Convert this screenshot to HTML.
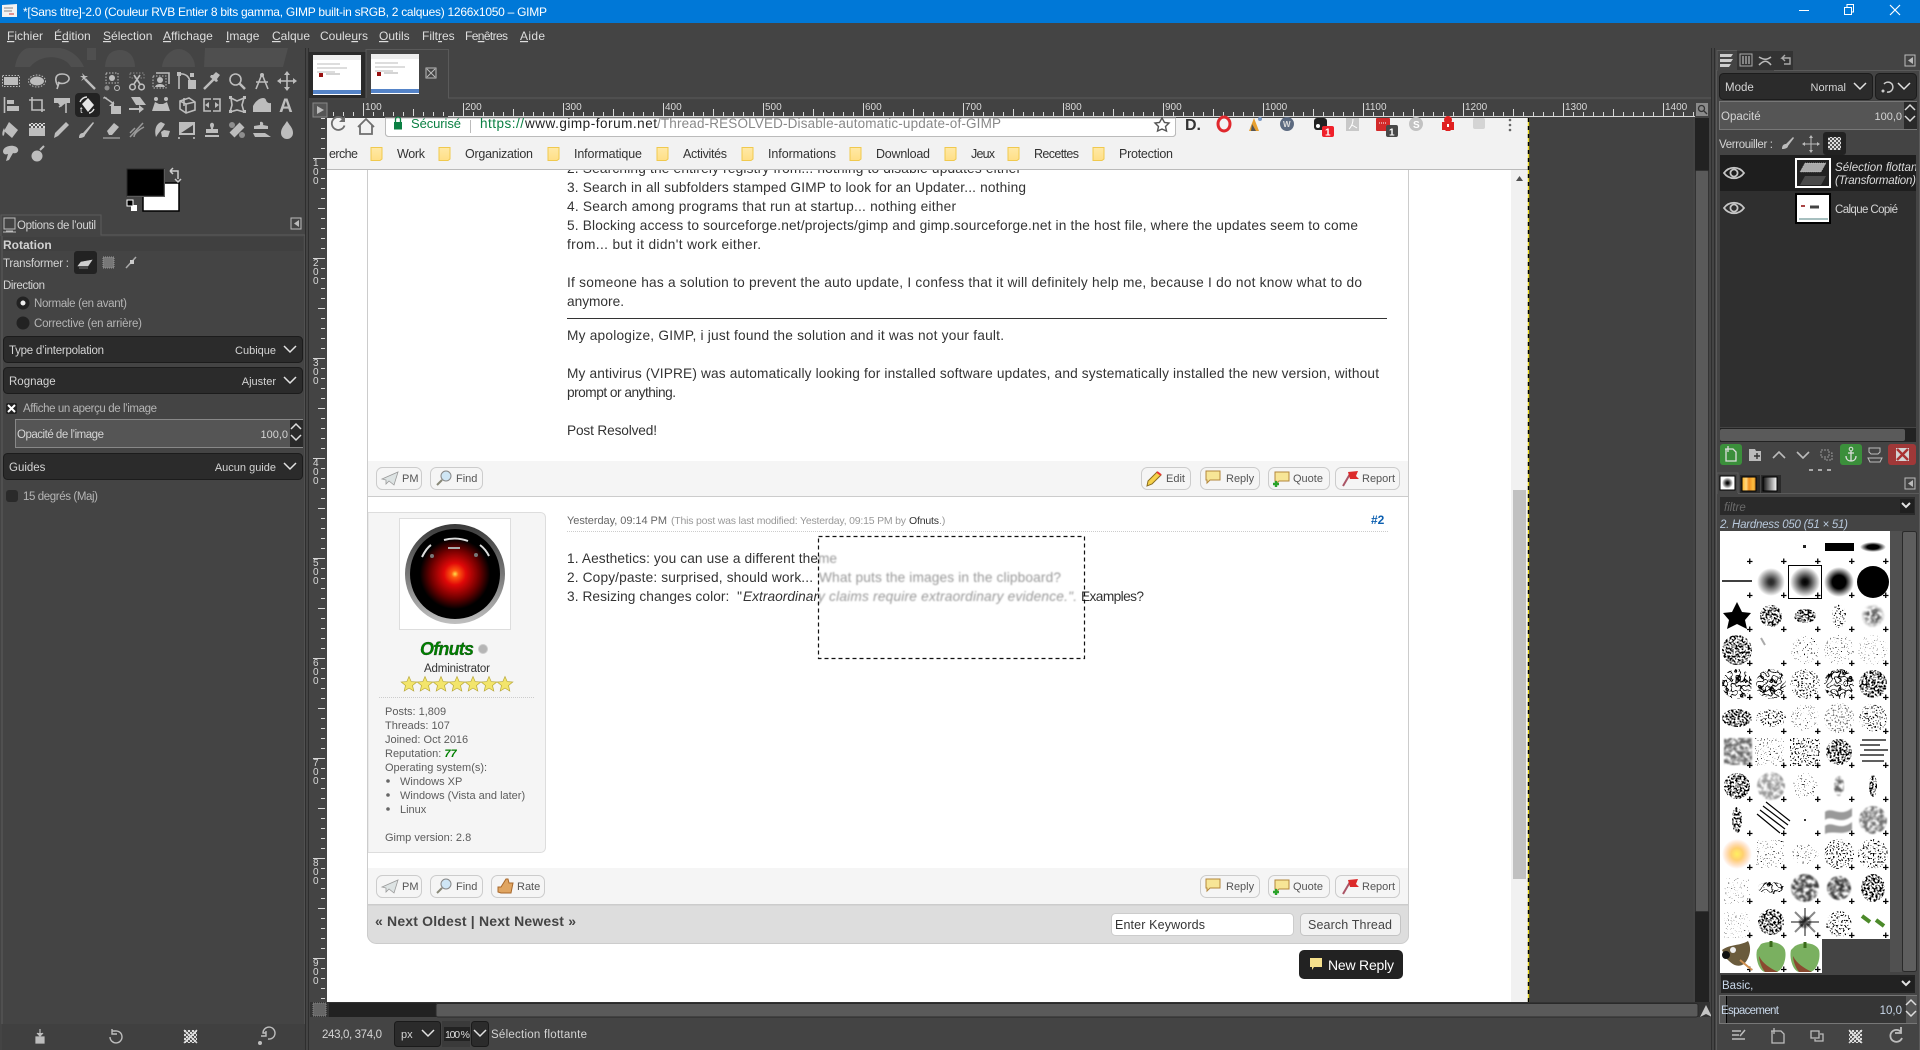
<!DOCTYPE html>
<html lang="fr"><head><meta charset="utf-8"><title>GIMP</title>
<style>
html,body{margin:0;padding:0;background:#444;overflow:hidden;width:1920px;height:1050px}
svg{display:block}
text{font-family:"Liberation Sans",sans-serif;white-space:pre}
.m{font-size:12px;fill:#dedede}
.g{font-size:11.5px;fill:#d4d4d4}
.v{font-size:11px;fill:#d4d4d4}
.d{font-size:11.5px;fill:#b5b5b5}
.p{font-size:13.7px;fill:#333}
.b{font-size:11px;fill:#555}
.a{font-size:11px;fill:#5c5c5c}
.k{font-size:12.5px;fill:#333}
.i{fill:#bdbdbd}
.s{fill:none;stroke:#bdbdbd;stroke-width:1.6}
.r{font-size:10px;fill:#d8d8d8}
</style></head><body>
<svg width="1920" height="1050" viewBox="0 0 1920 1050" xmlns="http://www.w3.org/2000/svg">
<defs>
<pattern id="rt" patternUnits="userSpaceOnUse" x="263" y="100" width="100" height="18"><path d="M.5 3V16M10.5 12V16M20.5 12V16M30.5 12V16M40.5 12V16M50.5 9V16M60.5 12V16M70.5 12V16M80.5 12V16M90.5 12V16" stroke="#d8d8d8" fill="none"/></pattern>
<pattern id="rl" patternUnits="userSpaceOnUse" x="310" y="58" width="17" height="100"><path d="M3 .5H15M11 10.5H15M11 20.5H15M11 30.5H15M11 40.5H15M8 50.5H15M11 60.5H15M11 70.5H15M11 80.5H15M11 90.5H15" stroke="#d8d8d8" fill="none"/></pattern>
<pattern id="plus" patternUnits="userSpaceOnUse" x="1720" y="531" width="34" height="34"><path d="M27 30.500H32.500M29.750 27.500V33" stroke="#000" stroke-width="1.300"/></pattern>
<pattern id="chk" width="4" height="4" patternUnits="userSpaceOnUse"><rect width="4" height="4" fill="#ddd"/><rect width="2" height="2" fill="#555"/><rect x="2" y="2" width="2" height="2" fill="#555"/></pattern>
<radialGradient id="hal"><stop offset="0" stop-color="#ffe14a"/><stop offset=".08" stop-color="#ff5a10"/><stop offset=".25" stop-color="#e00808"/><stop offset=".55" stop-color="#700000"/><stop offset=".8" stop-color="#000"/></radialGradient>
<linearGradient id="ring" x1="0" y1="0" x2="0" y2="1"><stop offset="0" stop-color="#3a3a3a"/><stop offset=".5" stop-color="#777"/><stop offset="1" stop-color="#c0c0c0"/></linearGradient>
<radialGradient id="s1"><stop offset="0" stop-color="#000"/><stop offset=".2" stop-color="#111"/><stop offset="1" stop-color="#000" stop-opacity="0"/></radialGradient>
<radialGradient id="s2"><stop offset="0" stop-color="#000"/><stop offset=".45" stop-color="#000"/><stop offset="1" stop-color="#000" stop-opacity="0"/></radialGradient>
<radialGradient id="sun"><stop offset="0" stop-color="#ffef60"/><stop offset=".4" stop-color="#ffd070"/><stop offset="1" stop-color="#ffb080" stop-opacity="0"/></radialGradient>
<linearGradient id="gr" x1="0" x2="1"><stop offset="0" stop-color="#111"/><stop offset="1" stop-color="#fff"/></linearGradient>
<linearGradient id="or" x1="0" x2="1"><stop offset="0" stop-color="#ffb020"/><stop offset=".3" stop-color="#ffd880"/><stop offset=".5" stop-color="#f09020"/><stop offset=".8" stop-color="#ffc040"/><stop offset="1" stop-color="#d08020"/></linearGradient>
<linearGradient id="fold" x1="0" y1="0" x2="0" y2="1"><stop offset="0" stop-color="#ffe9a6"/><stop offset="1" stop-color="#ffdf86"/></linearGradient>
<filter id="f1" x="-10%" y="-10%" width="120%" height="120%" color-interpolation-filters="sRGB"><feTurbulence type="fractalNoise" baseFrequency=".5" numOctaves="2" seed="3" result="n"/><feColorMatrix in="n" type="matrix" values="0 0 0 0 0 0 0 0 0 0 0 0 0 0 0 9 0 0 0 -4.200" result="t"/><feComposite in="t" in2="SourceGraphic" operator="in"/></filter>
<filter id="f2" x="-10%" y="-10%" width="120%" height="120%" color-interpolation-filters="sRGB"><feTurbulence type="fractalNoise" baseFrequency=".6" numOctaves="1" seed="8" result="n"/><feColorMatrix in="n" type="matrix" values="0 0 0 0 0 0 0 0 0 0 0 0 0 0 0 12 0 0 0 -6.800" result="t"/><feComposite in="t" in2="SourceGraphic" operator="in"/></filter>
<filter id="f3" x="-10%" y="-10%" width="120%" height="120%" color-interpolation-filters="sRGB"><feTurbulence type="turbulence" baseFrequency=".22" numOctaves="1" seed="5" result="n"/><feColorMatrix in="n" type="matrix" values="0 0 0 0 0 0 0 0 0 0 0 0 0 0 0 -14 0 0 0 1.700" result="t"/><feComposite in="t" in2="SourceGraphic" operator="in"/></filter>
<filter id="f4" x="-10%" y="-10%" width="120%" height="120%" color-interpolation-filters="sRGB"><feTurbulence type="fractalNoise" baseFrequency=".25" numOctaves="2" seed="11" result="n"/><feColorMatrix in="n" type="matrix" values="0 0 0 0 0 0 0 0 0 0 0 0 0 0 0 3 0 0 0 -.9" result="t"/><feComposite in="t" in2="SourceGraphic" operator="in"/><feGaussianBlur stdDeviation=".8"/></filter>
<filter id="f5" x="-10%" y="-10%" width="120%" height="120%" color-interpolation-filters="sRGB"><feTurbulence type="fractalNoise" baseFrequency=".7" numOctaves="1" seed="21" result="n"/><feColorMatrix in="n" type="matrix" values="0 0 0 0 0 0 0 0 0 0 0 0 0 0 0 20 0 0 0 -13" result="t"/><feComposite in="t" in2="SourceGraphic" operator="in"/></filter>
<filter id="bl"><feGaussianBlur stdDeviation=".7"/></filter>
<path id="chev" d="M-6-3L0 3 6-3" fill="none" stroke="#e2e2e2" stroke-width="1.500"/>
<path id="spin" d="M-5-2L0-7 5-2M-5 4L0 9 5 4" fill="none" stroke="#dcdcdc" stroke-width="1.500"/>
<g id="eye"><path d="M-10 0C-5-7 5-7 10 0 5 7-5 7-10 0Z" fill="none" stroke="#c6c6c6" stroke-width="1.800"/><circle r="3.600" fill="none" stroke="#c6c6c6" stroke-width="1.800"/></g>
<path id="star" d="M0-7.500L2.200-2.400 7.800-2 3.500 1.500 4.800 7 0 4.100-4.800 7-3.500 1.500-7.800-2-2.200-2.400Z" fill="#f3e56b" stroke="#b9a93a" stroke-width=".7"/>
<g id="fo"><path d="M0 .5H11V12L9 13.500H0Z" fill="url(#fold)" stroke="#f0c94e"/></g>
<g id="bub"><path d="M-7-6H7V3H-3L-6 6V3H-7Z" fill="#f7e596" stroke="#b3863c"/></g>
</defs>

<rect width="1920" height="1050" fill="#444"/>
<!-- Title bar -->
<rect width="1920" height="23" fill="#0078d7"/>
<path d="M2 5L17 4V17H2Z" fill="#f2f2f2"/><path d="M4 8H13M4 11H12" stroke="#888"/><path d="M9 14H14" stroke="#c33"/>
<text x="23" y="16" font-size="12" fill="#fff" textLength="524">*[Sans titre]-2.0 (Couleur RVB Entier 8 bits gamma, GIMP built-in sRGB, 2 calques) 1266x1050 – GIMP</text>
<path d="M1799 10.500H1809" stroke="#fff"/><path d="M1844.500 7.500H1851.500V14.500H1844.500ZM1847 7V4.500H1853.500V12H1852" fill="none" stroke="#fff"/><path d="M1890 5L1900 15M1900 5L1890 15" stroke="#fff" stroke-width="1.200"/>
<!-- Menu -->
<g class="m">
<text class="m" x="7" y="40"><tspan text-decoration="underline">F</tspan>ichier</text>
<text class="m" x="54" y="40">É<tspan text-decoration="underline">d</tspan>ition</text>
<text class="m" x="103" y="40"><tspan text-decoration="underline">S</tspan>élection</text>
<text class="m" x="163" y="40"><tspan text-decoration="underline">A</tspan>ffichage</text>
<text class="m" x="226" y="40"><tspan text-decoration="underline">I</tspan>mage</text>
<text class="m" x="272" y="40"><tspan text-decoration="underline">C</tspan>alque</text>
<text class="m" x="320" y="40">Coule<tspan text-decoration="underline">u</tspan>rs</text>
<text class="m" x="379" y="40"><tspan text-decoration="underline">O</tspan>utils</text>
<text class="m" x="422" y="40">Filt<tspan text-decoration="underline">r</tspan>es</text>
<text class="m" x="465" y="40" textLength="43">Fe<tspan text-decoration="underline">n</tspan>êtres</text>
<text class="m" x="520" y="40" textLength="25"><tspan text-decoration="underline">A</tspan>ide</text>
</g>
<!-- Wilber decoration -->
<path d="M15 67C17 54 24 48 29 48H60C72 50 80 58 84 67H71C66 56 42 52 30 67ZM105 67C106 54 112 50 120 50 130 50 135 58 135 67ZM87 48H96V60H87ZM162 67C163 56 172 49 178 49 188 49 195 58 195 67ZM205 48H288L283 67H204Z" fill="#4f4f4f"/>

<!-- Toolbox icons -->
<g>
<g transform="translate(11,81)"><rect x="-7" y="-4" width="14" height="8" class="i"/><rect x="-8.500" y="-5.500" width="17" height="11" fill="none" stroke="#bdbdbd" stroke-dasharray="1.500 1.500"/></g>
<g transform="translate(37,81)"><ellipse rx="7" ry="4.500" class="i"/><ellipse rx="8.500" ry="6" fill="none" stroke="#bdbdbd" stroke-dasharray="1.500 1.500"/></g>
<g transform="translate(62,81)"><path class="s" d="M-4 5C-7 0-8-7 0-7 7-7 9-2 5 1 2 3-2 3-4 1M-3 2L-5 8"/></g>
<g transform="translate(87,81)"><path d="M-2-2L8 8" stroke="#bdbdbd" stroke-width="2.400"/><path class="i" d="M-5-8L-4-5-7-5-4-3-6 0-3-2-1 0-2-3 1-5-2-5Z"/></g>
<g transform="translate(112,81)"><rect x="-6" y="-8" width="12" height="10" fill="none" stroke="#bdbdbd" stroke-dasharray="1.500 1.500"/><circle cy="-3" r="3" class="i"/><circle cx="-5" cy="7" r="2.500" fill="#8c8c8c"/><circle cx="5" cy="7" r="2.500" fill="none" stroke="#bdbdbd"/></g>
<g transform="translate(137,81)"><rect x="-7" y="-8" width="14" height="5" fill="none" stroke="#888" stroke-dasharray="1.500 1.500"/><path class="s" d="M-3-6L3 3M3-6L-3 3"/><circle cx="-4.500" cy="6" r="2.800" class="s"/><circle cx="4.500" cy="6" r="2.800" class="s"/></g>
<g transform="translate(161,81)"><rect x="-8" y="-5" width="13" height="12" fill="none" stroke="#bdbdbd" stroke-dasharray="1.500 1.500"/><path class="s" d="M-5-8H8V3"/><circle cx="-1" cy="-1" r="3" class="i"/><path class="i" d="M-6 6C-5 2 3 2 4 6Z"/></g>
<g transform="translate(187,81)"><path class="s" d="M-8-7V8M-8-7C0-8 2-3 3 0"/><rect x="-10" y="-9" width="4" height="4" class="i"/><rect x="1" y="-1" width="8" height="9" class="i"/><rect x="3" y="-8" width="4" height="4" class="i"/></g>
<g transform="translate(212,81)"><path d="M-8 8L3-3" stroke="#bdbdbd" stroke-width="2.500"/><path class="i" d="M1-6L4-9 8-6 5-2 6 0 4 1-2-4-1-6Z"/></g>
<g transform="translate(237,81)"><circle cx="-1.500" cy="-1.500" r="5.500" class="s"/><path d="M2.500 2.500L8 8" stroke="#bdbdbd" stroke-width="2.500"/></g>
<g transform="translate(262,81)"><path class="s" d="M0-7L-6 8M0-7L6 8M-6 1H6"/><circle cy="-6" r="2" class="i"/></g>
<g transform="translate(287,81)"><path class="s" d="M-7 0H7M0-7V7"/><path class="i" d="M0-10L3-6H-3ZM0 10L3 6H-3ZM-10 0L-6-3V3ZM10 0L6-3V3Z"/></g>

<g transform="translate(11,105)"><path d="M-6.500-8V8" stroke="#bdbdbd" stroke-width="1.600"/><rect x="-4" y="-5" width="7" height="4" class="i"/><rect x="-4" y="1" width="12" height="5" class="i"/></g>
<g transform="translate(37,105)"><path class="s" d="M-8-5H5V7M-5-8V5H8"/></g>
<g transform="translate(62,105)"><path class="i" d="M-8-7H8V-2H3L-1 2-4-2H-8Z"/><path class="s" d="M-3 2L4-3V8"/></g>
<rect x="75" y="93" width="25" height="24" rx="4" fill="#222"/>
<g transform="translate(87,105)"><path d="M-5-1L1-7 7 0 1 7Z" fill="#e6e6e6"/><path d="M-7-3C-6-6-3-8 0-8M7 4C6 6 4 8 2 8" stroke="#e6e6e6" fill="none" stroke-width="1.400"/><text x="-7" y="8" font-size="9" fill="#eee">t</text></g>
<g transform="translate(112,105)"><rect x="-1" y="1" width="10" height="8" class="i"/><path class="s" d="M-8-8L2-1"/><path class="i" d="M2-4V1H-3Z"/><path d="M-9-7H-5" stroke="#bdbdbd"/></g>
<g transform="translate(137,105)"><path class="i" d="M-6-8H3L9 0H-1ZM-8 3H2V0L7 4 2 8V5H-8Z"/></g>
<g transform="translate(161,105)"><path class="i" d="M-6-3L-2-1 2-1 6-3 9 6H-9ZM-5-8A2 2 0 0 1-5-4 2 2 0 0 1-5-8ZM5-8A2 2 0 0 1 5-4 2 2 0 0 1 5-8Z"/></g>
<g transform="translate(187,105)"><path class="s" d="M-7-4L2-7 8-3V5L-1 8-7 4ZM-7-4L-1-1V8M-1-1L8-3M-3-7L-3 1"/></g>
<g transform="translate(212,105)"><path class="s" d="M-1-6H-8V6H-1M1-6H8V6H1"/><path class="i" d="M-7 0L-3-3V3ZM7 0L3-3V3Z"/></g>
<g transform="translate(237,105)"><path class="s" d="M-6-7L0-4 7-7 5 0 7 7 0 5-7 7-5 0Z"/><rect x="-8" y="-9" width="3" height="3" class="i"/><rect x="6" y="-9" width="3" height="3" class="i"/><rect x="-8" y="5" width="3" height="3" class="i"/><rect x="6" y="5" width="3" height="3" class="i"/></g>
<g transform="translate(262,105)"><path class="i" d="M-9 7V1C-5-7 3-9 4-5 5-1 9-2 9-2V7Z"/></g>
<text x="279" y="112" font-size="19" font-weight="bold" fill="#bdbdbd">A</text>

<g transform="translate(11,130)"><path class="i" d="M-2-8L7 0 1 8-7 1Z"/><path class="i" d="M-7-2C-9 2-9 5-8 6-6 5-6 0-7-2Z"/></g>
<g transform="translate(37,130)"><rect x="-8" y="-2" width="16" height="8" fill="#bdbdbd"/><rect x="-8" y="-7" width="16" height="5" fill="url(#chk)"/></g>
<g transform="translate(62,130)"><path class="i" d="M-8 8L-7 3 4-8 7-5-4 6Z"/></g>
<g transform="translate(87,130)"><path class="i" d="M-8 8C-8 4-6 3-4 3L6-8 7-7-2 5C-2 7-5 8-8 8Z"/></g>
<g transform="translate(112,130)"><path class="i" d="M-5 1L2-7 7-3 0 5H-3Z"/><path d="M-9 8H8" stroke="#bdbdbd"/></g>
<g transform="translate(137,130)"><path d="M-7 7L6-7M-3 7C-3 3 3-1 7-3M-7 3L-2-2" stroke="#999" fill="none" stroke-width="1.500"/></g>
<g transform="translate(162,130)"><path class="i" d="M-1-8C-6-6-8 0-6 7-3 2 1-2 3-6ZM2 0L8 1 6 7H0L-1 2Z"/></g>
<g transform="translate(187,130)"><path class="i" d="M-8-8H8V5H-8ZM-6 3H6V-5Z"/><path class="s" d="M-8 7V9M7 7V9"/></g>
<g transform="translate(212,130)"><path class="i" d="M-2-5C-2-8 2-8 2-5 2-3 1-3 1-1H6V3H-6V-1H-1C-1-3-2-3-2-5ZM-7 5H7V7H-7Z"/></g>
<g transform="translate(237,130)"><path d="M-5 5L5-5" stroke="#bdbdbd" stroke-width="7"/><circle cx="-5" cy="-5" r="3" fill="#8e8e8e"/><circle cx="5" cy="5" r="3" fill="#8e8e8e"/></g>
<g transform="translate(262,130)"><path class="i" d="M-2-8C0-9 2-7 1-5L6-4V-1H-8V-4L-2-5ZM-9 3H3L9 7H-7Z"/></g>
<g transform="translate(287,130)"><path class="i" d="M0-9C3-4 6-2 6 3A6 6 0 0 1-6 3C-6-2-3-4 0-9Z"/></g>

<g transform="translate(11,153)"><path class="i" d="M-8-2C-7-8 5-9 7-4 8-1 5 1 2 0L-2 7-5 8-3 1C-6 2-8 1-8-2Z"/></g>
<g transform="translate(37,154)"><circle cy="2" r="5.500" class="i"/><path d="M3-4L7-8" stroke="#bdbdbd" stroke-width="2"/></g>
</g>

<!-- FG/BG -->
<rect x="143" y="183" width="36" height="28" fill="#fff" stroke="#000" stroke-width="1.500"/>
<rect x="127" y="169" width="37" height="27" fill="#000" stroke="#2a2a2a" stroke-width="1"/>
<rect x="164" y="169" width="1" height="28" fill="#5a5a5a"/><rect x="127" y="196" width="38" height="1" fill="#5a5a5a"/>
<path d="M170 171H178V179M170 171L173 168M170 171L173 174M175 179L178 182 181 179" fill="none" stroke="#ccc" stroke-width="1.500"/>
<rect x="131" y="205" width="6" height="6" fill="#fff"/><rect x="127" y="200" width="6" height="6" fill="#000" stroke="#fff"/>

<!-- Tool options -->
<path d="M1 236V215H101V235H305V1024M2 236V1024" fill="none" stroke="#5b5b5b"/>
<path d="M4 218H15V229H4ZM6 231H13M3 232H16" fill="none" stroke="#bdbdbd"/>
<text class="g" x="17" y="229" textLength="79">Options de l’outil</text>
<rect x="291" y="218" width="10" height="11" fill="none" stroke="#bbb"/><path d="M299 220V227L294 223.500Z" fill="#bbb"/>
<rect x="3" y="237" width="300" height="14" fill="#404040"/>
<text x="3" y="249" font-size="12" font-weight="bold" fill="#d2d2d2">Rotation</text>
<text class="g" x="3" y="267" textLength="66">Transformer :</text>
<rect x="74" y="251" width="23" height="23" rx="3" fill="#222"/><path d="M81 262L92 260 88 266H78ZM79 268H88" fill="#cfcfcf" stroke="#cfcfcf" stroke-width=".6"/>
<rect x="103" y="257" width="11" height="11" fill="#777" stroke="#999" stroke-dasharray="1 1"/>
<path d="M126 268L136 257" stroke="#aaa" stroke-width="1.500"/><rect x="130" y="260" width="4" height="4" fill="#ccc"/>
<text class="g" x="3" y="289" textLength="42">Direction</text>
<circle cx="23" cy="303" r="6.500" fill="#222"/><circle cx="23" cy="303" r="2.500" fill="#eee"/>
<text class="d" x="34" y="307" textLength="93">Normale (en avant)</text>
<circle cx="23" cy="323" r="6.500" fill="#222"/>
<text class="d" x="34" y="327" textLength="108">Corrective (en arrière)</text>
<rect x="3.500" y="336.500" width="299" height="26" rx="4" fill="#2b2b2b" stroke="#1c1c1c"/>
<text class="g" x="9" y="354" textLength="95">Type d’interpolation</text><text class="v" x="276" y="354" text-anchor="end">Cubique</text><use href="#chev" x="290" y="349"/>
<rect x="3.500" y="367.500" width="299" height="26" rx="4" fill="#2b2b2b" stroke="#1c1c1c"/>
<text class="g" x="9" y="385">Rognage</text><text class="v" x="276" y="385" text-anchor="end">Ajuster</text><use href="#chev" x="290" y="380"/>
<rect x="6" y="403" width="11" height="11" rx="2" fill="#222"/><path d="M8 405L15 412M15 405L8 412" stroke="#fff" stroke-width="2"/>
<text class="d" x="23" y="412" textLength="134">Affiche un aperçu de l’image</text>
<rect x="15.500" y="419.500" width="287" height="28" fill="#555" stroke="#888"/><rect x="290" y="420" width="13" height="27" fill="#2a2a2a"/>
<text class="g" x="17" y="438" textLength="87">Opacité de l’image</text><text class="v" x="288" y="438" text-anchor="end">100,0</text><use href="#spin" x="296" y="431"/>
<rect x="3.500" y="453.500" width="299" height="26" rx="4" fill="#2b2b2b" stroke="#1c1c1c"/>
<text class="g" x="9" y="471">Guides</text><text class="v" x="276" y="471" text-anchor="end">Aucun guide</text><use href="#chev" x="290" y="466"/>
<rect x="6" y="490" width="12" height="12" rx="3" fill="#2a2a2a"/>
<text class="d" x="23" y="500" textLength="75">15 degrés (Maj)</text>
<!-- Tool options bottom -->
<rect x="2" y="1024" width="303" height="26" fill="#404040"/>
<path d="M40 1029V1035M37 1033L40 1036 43 1033M36 1037H44V1043H36Z" fill="#bdbdbd" stroke="#bdbdbd" stroke-width="1.200"/>
<path d="M112 1031H115A6 6 0 1 1 110 1037M112 1029V1034H117" fill="none" stroke="#bdbdbd" stroke-width="1.400"/>
<rect x="184" y="1030" width="13" height="13" fill="url(#chk)"/><path d="M184 1030L197 1043M197 1030L184 1043" stroke="#ddd" stroke-width="1.500"/>
<path d="M268 1031H265A6 6 0 1 1 270 1037M268 1029V1034H263" fill="none" stroke="#bdbdbd" stroke-width="1.400" transform="translate(-2,2)"/><circle cx="260" cy="1043" r="2" fill="#bdbdbd"/>
<path d="M305.500 48V1050M308.500 48V1050" stroke="#2e2e2e"/>

<!-- Image tabs -->
<rect x="309" y="52" width="57" height="46" fill="#2a2a2a"/>
<path d="M366 98V49.500H448.500V98H1711" fill="none" stroke="#5a5a5a"/>
<g id="tb"><rect x="313" y="55" width="48" height="40" fill="#fff"/><rect x="313" y="55" width="48" height="5" fill="#eee"/><path d="M317 64H340M317 68H347M317 72H335" stroke="#bbb"/><rect x="319" y="73" width="4" height="4" fill="#911"/><path d="M326 74H340" stroke="#aaa"/><rect x="313" y="90" width="48" height="4" fill="#5584c8"/></g>
<rect x="371" y="54" width="48" height="40" fill="#fff"/><rect x="371" y="54" width="48" height="5" fill="#eee"/><path d="M375 63H398M375 67H405M375 71H393" stroke="#bbb"/><rect x="377" y="72" width="4" height="4" fill="#911"/><path d="M384 73H398" stroke="#aaa"/><rect x="371" y="89" width="48" height="4" fill="#5584c8"/>
<rect x="426" y="68" width="10" height="10" fill="none" stroke="#bbb"/><path d="M427 69L435 77M435 69L427 77" stroke="#bbb"/>

<!-- Rulers -->
<rect x="310" y="100" width="1400" height="18" fill="#424242"/>
<rect x="327" y="100" width="1368" height="18" fill="url(#rt)"/>
<rect x="313" y="103" width="14" height="14" fill="#555" stroke="#888"/><path d="M317 106V114L324 110Z" fill="#bbb"/>
<g class="r">
<text class="r" x="365" y="110">100</text><text class="r" x="465" y="110">200</text><text class="r" x="565" y="110">300</text><text class="r" x="665" y="110">400</text><text class="r" x="765" y="110">500</text><text class="r" x="865" y="110">600</text><text class="r" x="965" y="110">700</text><text class="r" x="1065" y="110">800</text><text class="r" x="1165" y="110">900</text><text class="r" x="1265" y="110">1000</text><text class="r" x="1365" y="110">1100</text><text class="r" x="1465" y="110">1200</text><text class="r" x="1565" y="110">1300</text><text class="r" x="1665" y="110">1400</text>
</g>
<rect x="1696" y="103" width="12" height="13" fill="#8a8a8a"/><circle cx="1701.500" cy="108.500" r="3" fill="none" stroke="#333" stroke-width="1.300"/><path d="M1704 111L1707 114" stroke="#333" stroke-width="1.300"/>
<path d="M448 116.500H1695" stroke="#d8d8d8"/>
<rect x="310" y="118" width="17" height="884" fill="url(#rl)"/>
<g class="r" font-size="10">
<text class="r" x="313" y="166">1</text><text class="r" x="313" y="175">0</text><text class="r" x="313" y="184">0</text>
<text class="r" x="313" y="266">2</text><text class="r" x="313" y="275">0</text><text class="r" x="313" y="284">0</text>
<text class="r" x="313" y="366">3</text><text class="r" x="313" y="375">0</text><text class="r" x="313" y="384">0</text>
<text class="r" x="313" y="466">4</text><text class="r" x="313" y="475">0</text><text class="r" x="313" y="484">0</text>
<text class="r" x="313" y="566">5</text><text class="r" x="313" y="575">0</text><text class="r" x="313" y="584">0</text>
<text class="r" x="313" y="666">6</text><text class="r" x="313" y="675">0</text><text class="r" x="313" y="684">0</text>
<text class="r" x="313" y="766">7</text><text class="r" x="313" y="775">0</text><text class="r" x="313" y="784">0</text>
<text class="r" x="313" y="866">8</text><text class="r" x="313" y="875">0</text><text class="r" x="313" y="884">0</text>
<text class="r" x="313" y="966">9</text><text class="r" x="313" y="975">0</text><text class="r" x="313" y="984">0</text>
</g>

<!-- Canvas page -->
<rect x="327" y="118" width="1202" height="884" fill="#fff"/>
<rect x="1529" y="118" width="164" height="884" fill="#424242"/>
<path d="M367.500 170V936M1408.500 170V936" stroke="#ccc"/>

<g class="p">
<text class="p" x="567" y="173" textLength="454">2. Searching the entirely registry from... nothing to disable updates either</text>
<text class="p" x="567" y="192" textLength="459">3. Search in all subfolders stamped GIMP to look for an Updater... nothing</text>
<text class="p" x="567" y="211" textLength="389">4. Search among programs that run at startup... nothing either</text>
<text class="p" x="567" y="230" textLength="791">5. Blocking access to sourceforge.net/projects/gimp and gimp.sourceforge.net in the host file, where the updates seem to come</text>
<text class="p" x="567" y="249" textLength="194">from... but it didn't work either.</text>
<text class="p" x="567" y="287" textLength="795">If someone has a solution to prevent the auto update, I confess that it will definitely help me, because I do not know what to do</text>
<text class="p" x="567" y="306" textLength="57">anymore.</text>
<text class="p" x="567" y="340" textLength="437">My apologize, GIMP, i just found the solution and it was not your fault.</text>
<text class="p" x="567" y="378" textLength="812">My antivirus (VIPRE) was automatically looking for installed software updates, and systematically installed the new version, without</text>
<text class="p" x="567" y="397" textLength="109">prompt or anything.</text>
<text class="p" x="567" y="435" textLength="90">Post Resolved!</text>
</g>
<path d="M567 318.500H1387" stroke="#333"/>

<!-- bar 1 -->
<rect x="368" y="461" width="1040" height="35" fill="#f5f5f5"/><path d="M368 496.500H1408" stroke="#ccc"/>
<g fill="#f5f5f5" stroke="#ccc">
<rect x="376.500" y="467.500" width="45" height="22" rx="6"/><rect x="430.500" y="467.500" width="52" height="22" rx="6"/>
<rect x="1141.500" y="467.500" width="49" height="22" rx="6"/><rect x="1200.500" y="467.500" width="59" height="22" rx="6"/><rect x="1268.500" y="467.500" width="61" height="22" rx="6"/><rect x="1335.500" y="467.500" width="64" height="22" rx="6"/>
</g>
<!-- second bar -->
<rect x="368" y="868" width="1040" height="36" fill="#f5f5f5"/>
<g fill="#f5f5f5" stroke="#ccc">
<rect x="376.500" y="875.500" width="45" height="22" rx="6"/><rect x="430.500" y="875.500" width="52" height="22" rx="6"/><rect x="491.500" y="875.500" width="53" height="22" rx="6"/>
<rect x="1200.500" y="875.500" width="59" height="22" rx="6"/><rect x="1268.500" y="875.500" width="61" height="22" rx="6"/><rect x="1335.500" y="875.500" width="64" height="22" rx="6"/>
</g>
<path d="M368 904.500H1408" stroke="#ccc"/>
<g id="btns">
<text class="b" x="402" y="482">PM</text><text class="b" x="456" y="482">Find</text><text class="b" x="1166" y="482">Edit</text><text class="b" x="1226" y="482">Reply</text><text class="b" x="1293" y="482">Quote</text><text class="b" x="1362" y="482">Report</text>
<text class="b" x="402" y="890">PM</text><text class="b" x="456" y="890">Find</text><text class="b" x="517" y="890">Rate</text><text class="b" x="1226" y="890">Reply</text><text class="b" x="1293" y="890">Quote</text><text class="b" x="1362" y="890">Report</text>
</g>
<g id="plane"><path d="M382 479L398 472 394 485 389 481 386 484V480Z" fill="#dde3e3" stroke="#999" stroke-width=".8"/><path d="M382 887L398 880 394 893 389 889 386 892V888Z" fill="#dde3e3" stroke="#999" stroke-width=".8"/></g>
<g><circle cx="446" cy="476" r="5" fill="#cfe6f5" stroke="#888"/><path d="M442 480L437 485" stroke="#887" stroke-width="2"/><circle cx="446" cy="884" r="5" fill="#cfe6f5" stroke="#888"/><path d="M442 888L437 893" stroke="#887" stroke-width="2"/></g>
<path d="M498 887H501L506 879H508L509 883H513L511 893H501L498 892Z" fill="#e0a561" stroke="#a8682b"/>
<path d="M1147 486L1148 481 1157 472 1161 475 1152 484Z" fill="#f6d14a" stroke="#8a6d1f"/><path d="M1157 472L1161 475" stroke="#e33" stroke-width="2"/>
<use href="#bub" x="1213" y="477"/><use href="#bub" x="1213" y="885"/>
<use href="#bub" x="1282" y="478"/><use href="#bub" x="1282" y="886"/>
<path d="M1276 481V487M1273 484H1279M1276 889V895M1273 892H1279" stroke="#2aa32a" stroke-width="2.400"/>
<path d="M1343 486L1350 474" stroke="#a56" stroke-width="2"/><path d="M1348 472L1358 471 1356 476 1359 479 1350 479Z" fill="#dc2a2a"/>
<path d="M1343 894L1350 882" stroke="#a56" stroke-width="2"/><path d="M1348 880L1358 879 1356 884 1359 887 1350 887Z" fill="#dc2a2a"/>

<!-- Author box -->
<path d="M368 512.500H540A5 5 0 0 1 545.500 517.500V847.500A5 5 0 0 1 540 852.500H368Z" fill="#f5f5f5" stroke="#ddd"/>
<path d="M367.500 497V870" stroke="#ccc"/>
<rect x="399.500" y="518.500" width="111" height="111" fill="#fff" stroke="#ddd"/>
<circle cx="455" cy="574" r="50" fill="url(#ring)"/><circle cx="455" cy="574" r="45" fill="#000"/><circle cx="455" cy="574" r="44" fill="url(#hal)"/>
<path d="M444 540C451 538 460 538 468 541M422 557C425 551 428 547 431 545M480 545C484 548 487 552 489 556" stroke="#ddd" fill="none" stroke-width="2"/><circle cx="432" cy="556" r="2" fill="#777"/><circle cx="476" cy="555" r="2" fill="#777"/><path d="M448 548H460" stroke="#aaa" stroke-width="2"/>
<text x="420" y="655" font-size="18" font-weight="bold" font-style="italic" fill="#008000" stroke="#111" stroke-width=".2" textLength="54">Ofnuts</text>
<circle cx="483" cy="649" r="4.500" fill="#b5b5b5" stroke="#ccc"/>
<text x="424" y="672" font-size="11.500" fill="#333" textLength="66">Administrator</text>
<use href="#star" x="409" y="684"/><use href="#star" x="425" y="684"/><use href="#star" x="441" y="684"/><use href="#star" x="457" y="684"/><use href="#star" x="473" y="684"/><use href="#star" x="489" y="684"/><use href="#star" x="505" y="684"/>
<path d="M379 697.500H535" stroke="#ccc" stroke-dasharray="1 1"/>
<g>
<text class="a" x="385" y="715">Posts: 1,809</text>
<text class="a" x="385" y="729">Threads: 107</text>
<text class="a" x="385" y="743">Joined: Oct 2016</text>
<text class="a" x="385" y="757">Reputation: <tspan fill="#007f00" font-weight="bold" font-style="italic">77</tspan></text>
<text class="a" x="385" y="771">Operating system(s):</text>
<circle cx="388" cy="781" r="1.800" fill="#666"/><text class="a" x="400" y="785">Windows XP</text>
<circle cx="388" cy="795" r="1.800" fill="#666"/><text class="a" x="400" y="799">Windows (Vista and later)</text>
<circle cx="388" cy="809" r="1.800" fill="#666"/><text class="a" x="400" y="813">Linux</text>
<text class="a" x="385" y="841">Gimp version: 2.8</text>
</g>
<!-- Post 2 -->
<text x="567" y="524" font-size="11" fill="#666" textLength="100">Yesterday, 09:14 PM</text>
<text x="671" y="524" font-size="10.500" fill="#999" textLength="235">(This post was last modified: Yesterday, 09:15 PM by</text>
<text x="909" y="524" font-size="10.500" fill="#333" textLength="30">Ofnuts</text><text x="939" y="524" font-size="10.500" fill="#999">.)</text>
<text x="1371" y="524" font-size="12" font-weight="bold" fill="#0c5fb0">#2</text>
<path d="M567 531.500H1388" stroke="#ccc" stroke-dasharray="1 1"/>
<text class="p" x="567" y="563" textLength="251">1. Aesthetics: you can use a different the</text>
<text class="p" x="567" y="582" textLength="246">2. Copy/paste: surprised, should work...</text>
<text class="p" x="567" y="601" textLength="175">3. Resizing changes color:  "</text>
<text class="p" x="743" y="601" font-style="italic" textLength="75">Extraordinar</text>
<g filter="url(#bl)" fill="#8a8a8a">
<text class="p" style="fill:#999" x="818" y="563">me</text>
<text class="p" style="fill:#999" x="819" y="582" textLength="242">What puts the images in the clipboard?</text>
<text class="p" style="fill:#999" x="818" y="601" font-style="italic" textLength="259">y claims require extraordinary evidence.".</text>
</g>
<text class="p" x="1081" y="601" textLength="63">Examples?</text>
<rect x="818.500" y="536.500" width="266" height="122" fill="none" stroke="#111" stroke-width="1.200" stroke-dasharray="4 3"/>

<!-- Bottom forum -->
<path d="M367.500 905V934A9 9 0 0 0 376.500 943.500H1400A8 8 0 0 0 1408.500 935V905Z" fill="#ddd" stroke="#ccc"/>
<text x="375" y="926" font-size="14" font-weight="bold" fill="#444" textLength="201">« Next Oldest | Next Newest »</text>
<rect x="1111.500" y="913.500" width="182" height="22" rx="4" fill="#fff" stroke="#ccc"/>
<text class="k" x="1115" y="929" textLength="90">Enter Keywords</text>
<rect x="1300.500" y="913.500" width="100" height="22" rx="4" fill="#f2f2f2" stroke="#c4c4c4"/>
<text class="k" x="1308" y="929" style="fill:#444" textLength="84">Search Thread</text>
<rect x="1299" y="950" width="104" height="29" rx="5" fill="#222"/>
<path d="M1310 958H1322V967H1314L1312 970V967H1310Z" fill="#f5e08c"/>
<text x="1328" y="970" font-size="14" fill="#fff" textLength="66">New Reply</text>

<!-- page scrollbar -->
<rect x="1511" y="170" width="17" height="832" fill="#f1f1f1"/><rect x="1513" y="490" width="13" height="389" fill="#c1c1c1"/>
<path d="M1516 181L1519.500 176 1523 181Z" fill="#505050"/>

<!-- Browser top -->
<rect x="327" y="118" width="1202" height="21" fill="#f2f2f2"/>
<path d="M385.500 118V133A3 3 0 0 0 388.500 136.500H1172A3 3 0 0 0 1175.500 133V118Z" fill="#fff" stroke="#bbb"/>
<path d="M343.500 119.500A6.500 6.500 0 1 0 344.500 125.500" fill="none" stroke="#6e6e6e" stroke-width="1.800"/><path d="M345 116V122H339Z" fill="#6e6e6e"/>
<path d="M358 127L366 119 374 127M360 125V134H372V125" fill="none" stroke="#6e6e6e" stroke-width="1.800"/>
<rect x="394" y="122" width="8" height="7.500" fill="#0b8043"/><path d="M395.500 122V119.500A2.500 2.500 0 0 1 400.500 119.500V122" fill="none" stroke="#0b8043" stroke-width="1.300"/>
<text x="411" y="128" font-size="13" fill="#0b8043" textLength="50">Sécurisé</text>
<path d="M470.500 120V133" stroke="#bbb"/>
<text x="480" y="128" font-size="13.500" fill="#0b8043" textLength="44">https://</text>
<text x="525" y="128" font-size="13.500" fill="#222" textLength="132">www.gimp-forum.net</text>
<text x="657" y="128" font-size="13.500" fill="#888" textLength="344">/Thread-RESOLVED-Disable-automatic-update-of-GIMP</text>
<path d="M1162 118L1164.500 122.500 1169 123 1165.500 126.500 1166.500 131 1162 129 1157.500 131 1158.500 126.500 1155 123 1159.500 122.500Z" fill="#fff" stroke="#555" stroke-width="1.400"/>
<!-- extensions -->
<text x="1185" y="130" font-size="16" font-weight="bold" fill="#333">D.</text>
<ellipse cx="1224" cy="124" rx="6" ry="7" fill="none" stroke="#e0282d" stroke-width="3"/>
<path d="M1254 118L1259 131H1249Z" fill="#e8a030"/><path d="M1252 124L1256 131H1251Z" fill="#555"/><circle cx="1260" cy="119" r="2" fill="#7a9ac4"/>
<circle cx="1287" cy="124" r="7" fill="#5c6a80"/><text x="1283" y="127" font-size="8" font-weight="bold" fill="#ddd">W</text>
<rect x="1314" y="118" width="13" height="12" rx="3" fill="#222"/><circle cx="1318" cy="126" r="2" fill="#fff"/><rect x="1322" y="126" width="12" height="11" rx="2" fill="#f0202a"/><text x="1325" y="135.500" font-size="10" font-weight="bold" fill="#fff">1</text>
<rect x="1346" y="118" width="13" height="13" fill="#c8c8c8"/><path d="M1349 129C1352 126 1353 122 1353 119M1352 125L1357 128" stroke="#fff" fill="none"/>
<rect x="1376" y="118" width="14" height="13" rx="1" fill="#d32a2a"/><path d="M1379 123H1387" stroke="#fff" stroke-dasharray="1 1"/>
<rect x="1386" y="125" width="12" height="12" rx="2" fill="#484848"/><text x="1389" y="135.500" font-size="10" font-weight="bold" fill="#fff">1</text>
<circle cx="1416" cy="124" r="7" fill="#c2c2c2"/><text x="1413" y="128" font-size="10" font-weight="bold" fill="#fff">S</text>
<path d="M1442 122H1454V130H1451L1450 131H1446L1445 130H1442Z" fill="#e02020"/><circle cx="1448" cy="120" r="4" fill="#e02020"/><rect x="1447" y="124" width="2" height="3" fill="#fff"/>
<rect x="1473" y="118" width="12" height="11" rx="2" fill="#d4d4d4"/>
<circle cx="1510" cy="120" r="1.300" fill="#666"/><circle cx="1510" cy="125" r="1.300" fill="#666"/><circle cx="1510" cy="130" r="1.300" fill="#666"/>
<!-- bookmarks -->
<rect x="327" y="137" width="1202" height="32" fill="#f2f2f2"/><path d="M327 169.500H1529" stroke="#bbb"/>
<path d="M385.500 130V133A3 3 0 0 0 388.500 136.500H1172A3 3 0 0 0 1175.500 133V130" fill="none" stroke="#bbb"/>
<g class="k">
<text class="k" x="329" y="158" textLength="29">erche</text>
<use href="#fo" x="371" y="147"/><text class="k" x="397" y="158" textLength="28">Work</text>
<use href="#fo" x="439" y="147"/><text class="k" x="465" y="158" textLength="68">Organization</text>
<use href="#fo" x="548" y="147"/><text class="k" x="574" y="158" textLength="68">Informatique</text>
<use href="#fo" x="657" y="147"/><text class="k" x="683" y="158" textLength="44">Activités</text>
<use href="#fo" x="742" y="147"/><text class="k" x="768" y="158" textLength="68">Informations</text>
<use href="#fo" x="850" y="147"/><text class="k" x="876" y="158" textLength="54">Download</text>
<use href="#fo" x="945" y="147"/><text class="k" x="971" y="158" textLength="24">Jeux</text>
<use href="#fo" x="1008" y="147"/><text class="k" x="1034" y="158" textLength="45">Recettes</text>
<use href="#fo" x="1093" y="147"/><text class="k" x="1119" y="158" textLength="54">Protection</text>
</g>
<!-- marching ants on right -->
<path d="M1528.500 118V1002" stroke="#e8d820" stroke-width="1.400"/><path d="M1528.500 118V1002" stroke="#000" stroke-width="1.400" stroke-dasharray="4 4"/>

<!-- canvas scrollbars -->
<rect x="1695" y="118" width="14" height="884" fill="#222"/><rect x="1695.500" y="170.500" width="13" height="741" rx="1" fill="#5a5a5a" stroke="#333"/>
<rect x="310" y="1002" width="1400" height="15" fill="#333"/>
<rect x="313" y="1003" width="13" height="13" fill="#666" stroke="#888" stroke-dasharray="1 1"/>
<rect x="329" y="1003" width="107" height="14" fill="#222"/>
<rect x="436" y="1003.500" width="1262" height="13.500" rx="2" fill="#5a5a5a" stroke="#2a2a2a"/>
<path d="M1700 1017L1706 1005 1712 1017 1706 1014Z" fill="#c4c4c4"/>
<!-- status -->
<text class="g" x="322" y="1038" textLength="60">243,0, 374,0</text>
<rect x="394.500" y="1021.500" width="46" height="25" rx="3" fill="#2b2b2b" stroke="#1a1a1a"/><text class="v" x="401" y="1038">px</text><use href="#chev" x="428" y="1033"/>
<rect x="442" y="1021" width="28" height="26" fill="#3a3a3a"/><rect x="444" y="1027" width="26" height="14" fill="#222"/><text x="445" y="1038" font-size="10.500" fill="#ddd" textLength="25">100 %</text>
<rect x="471.500" y="1021.500" width="17" height="25" rx="3" fill="#2b2b2b" stroke="#1a1a1a"/><use href="#chev" x="480" y="1033"/>
<text class="g" x="491" y="1038" textLength="96">Sélection flottante</text>
<path d="M1711.500 48V1050M1714.500 48V1050" stroke="#2e2e2e"/>

<!-- Right dock: layers -->
<path d="M1716.500 1050V70.500H1717V50.500H1737M1774 70.500H1919" fill="none" stroke="#5a5a5a"/>
<rect x="1737" y="51" width="56" height="19" fill="#333"/>
<path d="M1720 54H1733L1731 57H1720ZM1720 59H1733L1731 62H1720ZM1720 64H1731L1729 67H1720Z" fill="#ccc"/>
<rect x="1740" y="54" width="12" height="12" fill="none" stroke="#aaa"/><path d="M1743 56V64M1746 56V64M1749 56V64" stroke="#aaa" stroke-width="1.400"/>
<path d="M1759 57C1764 60 1767 60 1771 57M1759 65C1764 60 1767 60 1771 65" fill="none" stroke="#bbb" stroke-width="1.600"/>
<path d="M1787 58H1782L1785 55M1782 58L1785 61M1783 58H1790V64H1784" fill="none" stroke="#aaa" stroke-width="1.400"/>
<rect x="1905" y="55" width="10" height="11" fill="none" stroke="#bbb"/><path d="M1913 57V64L1908 60.500Z" fill="#bbb"/>
<rect x="1719.500" y="73.500" width="153" height="26" rx="4" fill="#2b2b2b" stroke="#1c1c1c"/>
<text class="g" x="1725" y="91">Mode</text><text class="v" x="1846" y="91" text-anchor="end">Normal</text><use href="#chev" x="1860" y="86"/>
<rect x="1875.500" y="73.500" width="41" height="26" rx="4" fill="#2b2b2b" stroke="#1c1c1c"/>
<path d="M1884 84A5 5 0 1 1 1887 92" fill="none" stroke="#ccc" stroke-width="1.500"/><circle cx="1883" cy="91" r="1.500" fill="#ccc"/><use href="#chev" x="1904" y="86"/>
<rect x="1719.500" y="101.500" width="197" height="28" fill="#555" stroke="#777"/><rect x="1904" y="102" width="13" height="27" fill="#2a2a2a"/>
<text class="g" x="1721" y="120">Opacité</text><text class="v" x="1902" y="120" text-anchor="end">100,0</text><use href="#spin" x="1910" y="112"/>
<text class="g" x="1719" y="148" textLength="54">Verrouiller :</text>
<path d="M1782 149C1782 145 1784 144 1786 144L1793 137 1794 138 1788 146C1788 148 1785 149 1782 149Z" fill="#bbb"/>
<path d="M1811 137V151M1804 144H1818" stroke="#bbb"/><path d="M1811 135L1813 138H1809ZM1811 153L1813 150H1809ZM1802 144L1805 142V146ZM1820 144L1817 142V146Z" fill="#bbb"/>
<rect x="1823" y="132" width="23" height="23" rx="3" fill="#222"/><rect x="1828" y="137" width="13" height="13" fill="url(#chk)"/>
<rect x="1720" y="155" width="196" height="272" fill="#2f2f2f"/>
<rect x="1720" y="155" width="196" height="36" fill="#1e1e1e"/>
<use href="#eye" x="1734" y="173"/><use href="#eye" x="1734" y="208"/>
<rect x="1796" y="159" width="34" height="28" fill="#222" stroke="#fff" stroke-width="2"/><path d="M1805 163H1826L1821 172H1800Z" fill="#aaa" stroke="#ddd" stroke-dasharray="1 1" stroke-width=".5"/><path d="M1805 176H1826L1821 185H1800Z" fill="#4a4a4a"/>
<text x="1835" y="171" font-size="11.500" font-style="italic" fill="#ddd" textLength="92">Sélection flottante</text>
<rect x="1916" y="155" width="4" height="36" fill="#444"/>
<text x="1835" y="184" font-size="11.500" font-style="italic" fill="#ddd" textLength="81">(Transformation)</text>
<rect x="1795" y="193" width="36" height="31" fill="#000"/><rect x="1797" y="195" width="32" height="27" fill="#fff"/><path d="M1801 206H1805" stroke="#a44" stroke-width="2"/><path d="M1810 207H1819" stroke="#444" stroke-width="3"/><path d="M1799 219H1828" stroke="#8aa" stroke-width="1.500"/>
<text class="g" x="1835" y="213" textLength="63">Calque Copié</text>
<rect x="1720" y="428" width="196" height="14" fill="#222"/><rect x="1720" y="429" width="185" height="12" rx="2" fill="#5a5a5a"/>
<!-- Layer buttons -->
<rect x="1720" y="444" width="22" height="21" rx="3" fill="#3b8f3b"/><path d="M1726 449H1733L1736 452V461H1726ZM1728 446V452M1725 449H1731" fill="none" stroke="#ddd" stroke-width="1.300"/>
<path d="M1749 449H1755L1756 451H1761V461H1749Z" fill="#bbb"/><path d="M1757 453V459M1754 456H1760" stroke="#333" stroke-width="1.400"/>
<path d="M1773 458L1779 452 1785 458" fill="none" stroke="#bbb" stroke-width="1.600"/>
<path d="M1797 452L1803 458 1809 452" fill="none" stroke="#bbb" stroke-width="1.600"/>
<path d="M1821 450H1829V457H1821ZM1825 458V460H1832V453H1830" fill="none" stroke="#999" stroke-dasharray="2 1"/>
<rect x="1840" y="444" width="22" height="21" rx="3" fill="#3b8f3b"/><circle cx="1851" cy="449" r="1.800" fill="none" stroke="#ddd"/><path d="M1851 451V461M1846 456C1846 460 1849 461 1851 461 1853 461 1856 460 1856 456M1848 453H1854" fill="none" stroke="#ddd" stroke-width="1.300"/>
<path d="M1869 448H1880V452L1878 454H1871L1869 452ZM1868 458H1882L1880 462H1870Z" fill="none" stroke="#bbb"/>
<rect x="1888" y="444" width="28" height="21" rx="3" fill="#a03838"/><rect x="1896" y="448" width="13" height="13" fill="#d4d4d4"/><path d="M1897 449L1908 460M1908 449L1897 460" stroke="#a33" stroke-width="2.400"/>
<path d="M1809 470H1813M1818 470H1822M1827 470H1831" stroke="#aaa" stroke-width="2"/>
<!-- Brushes panel -->
<path d="M1716.500 493.500H1717V473H1738V493M1738 493.500H1919" fill="none" stroke="#5a5a5a"/>
<rect x="1720" y="476" width="15" height="14" fill="#fff" stroke="#000"/><circle cx="1727.500" cy="483" r="5.500" fill="url(#s1)"/>
<rect x="1740" y="475" width="20" height="18" fill="#2a2a2a"/><rect x="1742" y="477" width="14" height="14" fill="url(#or)" stroke="#000"/>
<rect x="1761" y="475" width="20" height="18" fill="#2a2a2a"/><rect x="1763" y="477" width="14" height="14" fill="url(#gr)" stroke="#000"/>
<rect x="1905" y="478" width="10" height="11" fill="none" stroke="#bbb"/><path d="M1913 480V487L1908 483.500Z" fill="#bbb"/>
<rect x="1720" y="497" width="195" height="18" fill="#2a2a2a"/><text x="1724" y="511" font-size="11.500" font-style="italic" fill="#6a6a6a">filtre</text>
<rect x="1900" y="499" width="14" height="14" fill="#1f1f1f"/><path d="M1902 503L1906 507 1910 503" fill="none" stroke="#e2e2e2" stroke-width="2"/>
<text x="1720" y="528" font-size="11.500" font-style="italic" fill="#b9c9dc" textLength="128">2. Hardness 050 (51 × 51)</text>
<rect x="1890" y="531" width="12" height="441" fill="#505050"/>
<rect x="1902.500" y="531.500" width="14" height="440" rx="2" fill="#5e5e5e" stroke="#2a2a2a"/>
<rect x="1720" y="531" width="170" height="442" fill="#fff"/>
<!-- brush cells -->
<g>
<rect x="1803" y="545" width="3" height="3" fill="#222"/>
<rect x="1825" y="543" width="29" height="8" fill="#000"/>
<ellipse cx="1873" cy="547" rx="13" ry="5" fill="url(#s2)"/>
<path d="M1722 581H1752" stroke="#000" stroke-width="1.500"/>
<circle cx="1771" cy="582" r="14" fill="url(#s1)" opacity=".85"/>
<circle cx="1805" cy="582" r="15" fill="url(#s1)"/>
<circle cx="1839" cy="582" r="15" fill="url(#s2)"/>
<circle cx="1873" cy="582" r="16" fill="#000"/>
<rect x="1788.500" y="565.500" width="33" height="33" fill="none" stroke="#000"/>
<path d="M1737 602L1742 612 1751 613 1745 620 1747 629 1737 624 1727 629 1729 620 1723 613 1732 612Z" fill="#000"/>
<circle cx="1771" cy="616" r="11" fill="#000" filter="url(#f1)"/>
<ellipse cx="1805" cy="616" rx="11" ry="7" fill="#000" filter="url(#f1)"/>
<ellipse cx="1839" cy="616" rx="7" ry="12" fill="#000" filter="url(#f2)"/>
<circle cx="1873" cy="616" r="12" fill="url(#s2)" filter="url(#f4)" opacity=".7"/>
<circle cx="1737" cy="650" r="15" fill="#000" filter="url(#f1)"/>
<path d="M1761 638L1765 645" stroke="#aaa" stroke-width="2"/>
<circle cx="1805" cy="650" r="14" fill="#000" filter="url(#f5)"/>
<circle cx="1839" cy="650" r="15" fill="#000" filter="url(#f5)"/>
<circle cx="1873" cy="650" r="15" fill="#000" filter="url(#f5)" opacity=".7"/>
<circle cx="1737" cy="684" r="15" fill="#000" filter="url(#f3)"/>
<circle cx="1771" cy="684" r="15" fill="#000" filter="url(#f3)"/>
<circle cx="1805" cy="684" r="15" fill="#000" filter="url(#f2)"/>
<circle cx="1839" cy="684" r="15" fill="#000" filter="url(#f3)"/>
<circle cx="1873" cy="684" r="14" fill="#111" filter="url(#f1)"/>
<ellipse cx="1737" cy="718" rx="15" ry="9" fill="#000" filter="url(#f1)"/>
<ellipse cx="1771" cy="718" rx="15" ry="9" fill="#000" filter="url(#f2)"/>
<circle cx="1805" cy="718" r="14" fill="#000" filter="url(#f5)"/>
<circle cx="1839" cy="718" r="15" fill="#000" filter="url(#f2)" opacity=".55"/>
<circle cx="1873" cy="718" r="14" fill="#000" filter="url(#f2)"/>
<rect x="1724" y="738" width="28" height="27" fill="#000" filter="url(#f4)" opacity=".6"/>
<rect x="1755" y="738" width="30" height="28" fill="#000" filter="url(#f5)"/>
<rect x="1790" y="738" width="30" height="28" fill="#000" filter="url(#f2)"/>
<circle cx="1839" cy="752" r="13" fill="#000" filter="url(#f1)"/>
<path d="M1862 740H1886M1860 745H1880M1864 750H1888M1860 755H1884M1862 761H1884" stroke="#000" stroke-width="1.300"/>
<circle cx="1737" cy="786" r="13" fill="#222" filter="url(#f1)"/>
<circle cx="1771" cy="786" r="14" fill="#000" filter="url(#f4)" opacity=".4"/>
<circle cx="1805" cy="786" r="13" fill="#000" filter="url(#f5)"/>
<ellipse cx="1839" cy="786" rx="5" ry="10" fill="#000" filter="url(#f4)" opacity=".6"/>
<ellipse cx="1873" cy="786" rx="4" ry="11" fill="#000" filter="url(#f1)"/>
<ellipse cx="1737" cy="820" rx="5" ry="13" fill="#000" filter="url(#f1)"/>
<path d="M1760 810L1785 829M1763 806L1788 825M1766 802L1790 821M1757 814L1780 833" stroke="#000" stroke-width="1.200"/>
<rect x="1804" y="819" width="2" height="2" fill="#333"/>
<path d="M1825 812C1832 806 1840 818 1852 808V816C1840 826 1832 814 1825 820ZM1825 826C1832 820 1840 832 1852 822V830C1842 836 1832 830 1825 834Z" fill="#999" filter="url(#bl)"/>
<circle cx="1873" cy="820" r="14" fill="#000" filter="url(#f4)" opacity=".55"/>
<circle cx="1737" cy="854" r="15" fill="url(#sun)"/>
<rect x="1756" y="840" width="28" height="28" fill="#000" filter="url(#f5)"/>
<ellipse cx="1805" cy="854" rx="14" ry="10" fill="#000" filter="url(#f5)"/>
<circle cx="1839" cy="854" r="15" fill="#000" filter="url(#f2)"/>
<circle cx="1873" cy="854" r="15" fill="#222" filter="url(#f2)"/>
<rect x="1724" y="878" width="26" height="26" fill="#000" filter="url(#f5)" opacity=".6"/>
<ellipse cx="1771" cy="888" rx="13" ry="6" fill="#000" filter="url(#f3)"/>
<circle cx="1805" cy="888" r="14" fill="#000" filter="url(#f4)" opacity=".75"/>
<circle cx="1839" cy="888" r="12" fill="#000" filter="url(#f4)" opacity=".8"/>
<ellipse cx="1873" cy="888" rx="12" ry="14" fill="#000" filter="url(#f1)"/>
<rect x="1724" y="912" width="26" height="26" fill="#000" filter="url(#f5)" opacity=".6"/>
<circle cx="1771" cy="922" r="13" fill="#333" filter="url(#f1)"/>
<path d="M1805 908V936M1791 922H1819M1795 912L1815 932M1815 912L1795 932" stroke="#888" stroke-width="2"/><circle cx="1805" cy="922" r="6" fill="#000" filter="url(#f4)" opacity=".8"/>
<circle cx="1839" cy="924" r="13" fill="#222" filter="url(#f2)"/>
<path d="M1862 916L1870 922M1876 920L1884 926" stroke="#4c8a2a" stroke-width="4"/>
<rect x="1720" y="531" width="170" height="442" fill="url(#plus)"/>
<rect x="1822" y="939" width="68" height="34" fill="#444"/>
<!-- wilber + peppers -->
<path d="M1722 950C1730 944 1740 946 1748 941 1752 948 1750 958 1744 964 1736 969 1730 962 1726 958Z" fill="#6a5b3c"/><circle cx="1726" cy="955" r="4" fill="#111"/><circle cx="1733" cy="950" r="3" fill="#eee"/><path d="M1740 960L1752 970" stroke="#d09050" stroke-width="2"/>
<path d="M1761 944C1770 940 1782 942 1785 950 1787 958 1783 971 1776 972H1765C1759 971 1755 958 1757 950Z" fill="#7ab060"/><path d="M1765 972C1761 967 1759 960 1759 956 1763 964 1770 968 1778 972Z" fill="#8a4a30"/><path d="M1771 941V947" stroke="#3a6a1a" stroke-width="3"/>
<path d="M1795 946C1804 941 1816 943 1819 950 1821 958 1817 971 1810 972H1799C1793 971 1789 958 1791 950Z" fill="#7ab060"/><path d="M1799 972C1795 967 1793 960 1793 956 1797 964 1804 968 1812 972Z" fill="#8a4a30"/><path d="M1805 942V948" stroke="#3a6a1a" stroke-width="3"/>
</g>
<rect x="1721" y="975" width="194" height="18" fill="#222"/>
<text x="1722" y="989" font-size="11.500" fill="#c9d8ea">Basic,</text>
<rect x="1900" y="977" width="14" height="14" fill="#1f1f1f"/><path d="M1902 981L1906 985 1910 981" fill="none" stroke="#e2e2e2" stroke-width="2"/>
<rect x="1719.500" y="995.500" width="197" height="28" fill="#363636" stroke="#777"/><rect x="1720" y="996" width="6" height="27" fill="#555"/><rect x="1726" y="996" width="1" height="27" fill="#000"/><rect x="1906" y="996" width="11" height="27" fill="#555"/>
<text x="1721" y="1014" font-size="11.500" fill="#c9d8ea" textLength="58">Espacement</text>
<text x="1902" y="1014" font-size="11.500" fill="#c9d8ea" text-anchor="end">10,0</text><use href="#spin" x="1911" y="1007"/>
<!-- brush bottom icons -->
<path d="M1732 1031H1741M1732 1035H1739M1732 1039H1745M1740 1036L1745 1030" stroke="#bdbdbd" stroke-width="1.500" fill="none"/>
<path d="M1772 1031H1781L1784 1034V1043H1772ZM1774 1028V1034M1771 1031H1777" fill="none" stroke="#bdbdbd" stroke-width="1.300"/>
<path d="M1811 1031H1819V1038H1811ZM1820 1034H1823V1041H1815V1039" fill="none" stroke="#bdbdbd" stroke-width="1.300"/>
<rect x="1849" y="1030" width="13" height="13" fill="url(#chk)"/><path d="M1849 1030L1862 1043M1862 1030L1849 1043" stroke="#ddd" stroke-width="1.500"/>
<path d="M1901 1032A6 6 0 1 0 1902 1038M1901 1027V1033H1895" fill="none" stroke="#bdbdbd" stroke-width="1.800"/>
<path d="M1919.500 70V1050" stroke="#5a5a5a"/>
</svg>
</body></html>
